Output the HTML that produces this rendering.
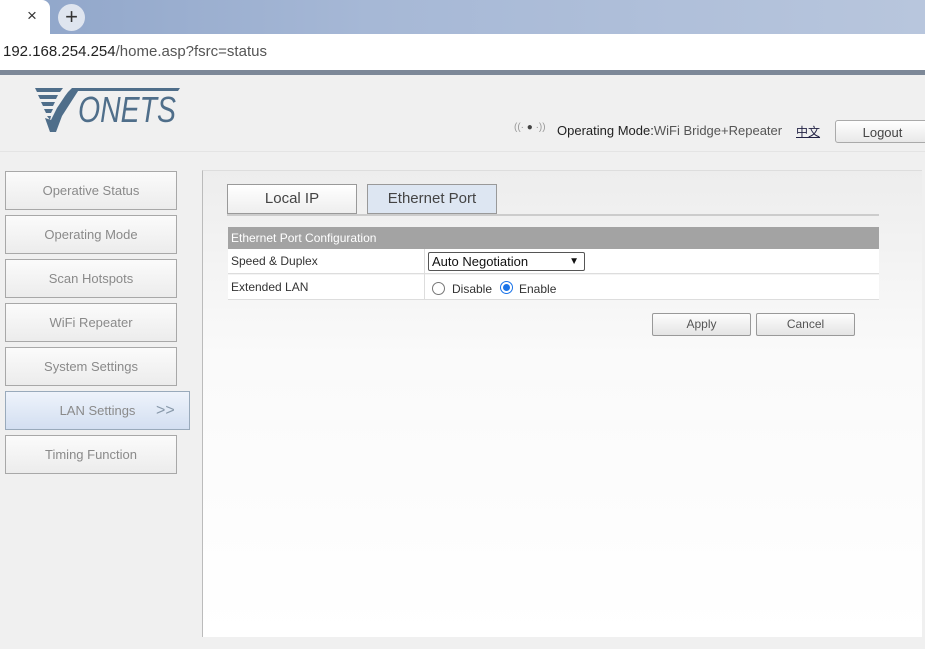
<!DOCTYPE html>
<html><head><meta charset="utf-8"><style>
*{box-sizing:border-box;margin:0;padding:0}
body{width:925px;height:649px;overflow:hidden;background:#f0f0f0;font-family:"Liberation Sans",sans-serif;position:relative}
.abs{position:absolute}
.tabs{left:0;top:0;width:925px;height:34px;background:linear-gradient(90deg,#8fa5c9,#a6b8d6 40%,#b8c6dd)}
.tab{left:0;top:0;width:50px;height:34px;background:#fff;border-top-right-radius:8px}
.addr{left:0;top:34px;width:925px;height:36px;background:#fff}
.bar{left:0;top:70px;width:925px;height:5px;background:#7d8898}
.nav{left:5px;width:172px;height:39px;border:1px solid #a8a8a8;background:linear-gradient(#fbfbfb,#ececec);color:#8a8a8a;font-size:13px;text-align:center;line-height:37px}
.panel{left:202px;top:170px;width:720px;height:467px;background:linear-gradient(#ededed,#fafafa 40%,#fff);border-left:1px solid #bbb;border-top:1px solid #ddd}
.t{top:184px;width:130px;height:30px;border:1px solid #999;font-size:15px;color:#444;text-align:center;line-height:28px}
.row{left:228px;width:651px;height:25px;background:#fff;border-bottom:1px solid #ddd;font-size:12px;color:#333;line-height:25px}
.btn{top:313px;width:99px;height:23px;border:1px solid #999;border-radius:2px;background:linear-gradient(#fdfdfd,#e4e4e4);font-size:12px;color:#555;text-align:center;line-height:21px}
</style></head><body>
<div class="abs tabs"></div>
<div class="abs tab"></div>
<div class="abs" style="left:27px;top:6px;font-size:17px;color:#333">×</div>
<div class="abs" style="left:58px;top:4px;width:27px;height:27px;border-radius:50%;background:#dfe5ef;text-align:center;font-size:22px;line-height:26px;color:#333">+</div>
<div class="abs addr"></div>
<div class="abs" style="left:3px;top:43px;font-size:15px;color:#222">192.168.254.254<span style="color:#555">/home.asp?fsrc=status</span></div>
<div class="abs bar"></div>
<svg class="abs" style="left:34px;top:86px" width="148" height="50" viewBox="0 0 148 50">
<g fill="#4f6e8a">
<path d="M1 2h28l-3 4H3zM4 9h20l-2 4H6zM7 16h14l-2 4H9zM10 23h9l-2 4h-5zM13 30h4l-1 4z"/>
<path d="M16 46L11 32l6 2 6-12 4-6 4-6 3-4 4-4h8L28 30 22 46z"/>
</g>
<text x="44" y="36" font-family="Liberation Sans" font-style="italic" font-size="36" fill="#4f6e8a" textLength="98" lengthAdjust="spacingAndGlyphs">ONETS</text>
<path d="M44 2h102l-2 3H42z" fill="#4f6e8a"/>
</svg>
<div class="abs" style="left:514px;top:122px;font-size:10px;color:#999">((· <span style="color:#444">●</span> ·))</div>
<div class="abs" style="left:557px;top:123px;font-size:13px;color:#222">Operating Mode:<span style="color:#555">WiFi Bridge+Repeater</span></div>
<div class="abs" style="left:796px;top:123px;font-size:12px;color:#224;text-decoration:underline;font-family:'Liberation Sans','Noto Sans CJK SC',sans-serif">中文</div>
<div class="abs" style="left:835px;top:120px;width:95px;height:23px;border:1px solid #aaa;border-radius:3px;background:linear-gradient(#fff,#e8e8e8);font-size:13px;color:#444;text-align:center;line-height:23px">Logout</div>
<div class="abs" style="left:0;top:151px;width:925px;height:1px;background:#e4e4e4"></div>

<div class="abs nav" style="top:171px">Operative Status</div>
<div class="abs nav" style="top:215px">Operating Mode</div>
<div class="abs nav" style="top:259px">Scan Hotspots</div>
<div class="abs nav" style="top:303px">WiFi Repeater</div>
<div class="abs nav" style="top:347px">System Settings</div>
<div class="abs nav" style="top:391px;width:185px;background:linear-gradient(#eef3fb,#d3dff1);border-color:#9ab">LAN Settings<span style="position:absolute;left:150px;font-size:16px;color:#8899aa">&gt;&gt;</span></div>
<div class="abs nav" style="top:435px">Timing Function</div>

<div class="abs panel"></div>
<div class="abs t" style="left:227px;background:linear-gradient(#fff,#eee)">Local IP</div>
<div class="abs t" style="left:367px;background:#dde6f2">Ethernet Port</div>
<div class="abs" style="left:227px;top:214px;width:652px;height:2px;background:#ccc"></div>
<div class="abs" style="left:228px;top:227px;width:651px;height:22px;background:#a3a3a3;color:#fff;font-size:12px;line-height:22px;padding-left:3px">Ethernet Port Configuration</div>
<div class="abs row" style="top:249px"><span style="padding-left:3px">Speed &amp; Duplex</span></div>
<div class="abs row" style="top:275px"><span style="padding-left:3px">Extended LAN</span></div>
<div class="abs" style="left:424px;top:249px;width:1px;height:51px;background:#ddd"></div>
<div class="abs" style="left:428px;top:252px;width:157px;height:19px;border:1px solid #555;border-radius:2px;background:#fff;font-size:13px;color:#111;line-height:17px;padding-left:3px">Auto Negotiation<span style="position:absolute;right:5px;font-size:10px">▼</span></div>
<div class="abs" style="left:432px;top:282px;width:13px;height:13px;border:1px solid #777;border-radius:50%;background:#fff"></div>
<div class="abs" style="left:452px;top:282px;font-size:12px;color:#333">Disable</div>
<div class="abs" style="left:500px;top:281px;width:13px;height:13px;border:1px solid #1a73e8;border-radius:50%;background:#fff"><div style="margin:2px;width:7px;height:7px;border-radius:50%;background:#1a73e8"></div></div>
<div class="abs" style="left:519px;top:282px;font-size:12px;color:#333">Enable</div>
<div class="abs btn" style="left:652px">Apply</div>
<div class="abs btn" style="left:756px">Cancel</div>
</body></html>
